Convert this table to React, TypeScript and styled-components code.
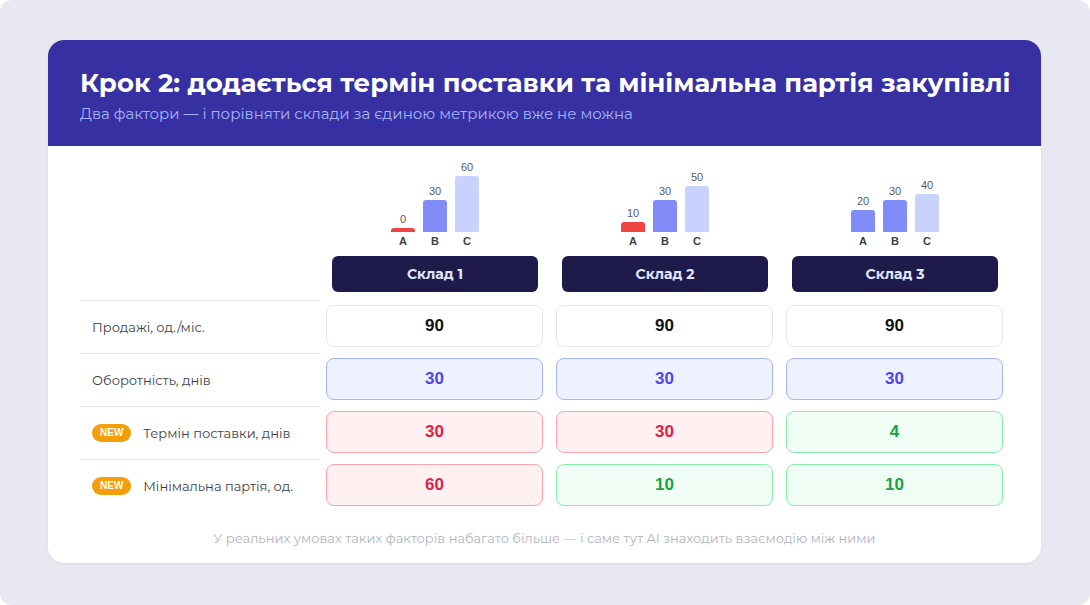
import React from 'react'
import styled, { createGlobalStyle } from 'styled-components'

const GlobalStyle = createGlobalStyle`
  html, body {
    margin: 0;
    padding: 0;
    background: #ffffff;
  }
  * {
    box-sizing: border-box;
  }
`

const SANS = `"Montserrat", "Inter", "Noto Sans", sans-serif`
const ARIAL = `"Liberation Sans", Arial, sans-serif`

const Page = styled.div`
  width: 1090px;
  height: 605px;
  background: #e8e8f2;
  border-radius: 12px;
  padding: 40px 49px 0 48px;
`

const Card = styled.div`
  background: #ffffff;
  border-radius: 16px;
  overflow: hidden;
  height: 523px;
  box-shadow: 0 1px 3px rgba(30, 27, 75, 0.06);
`

const Header = styled.header`
  background: #3730a3;
  height: 106px;
  padding: 27px 32px 0;
`

const Title = styled.h1`
  margin: 0;
  font-family: ${SANS};
  font-weight: 700;
  font-size: 26px;
  line-height: 32px;
  color: #ffffff;
  white-space: nowrap;
`

const Subtitle = styled.p`
  margin: 5px 0 0;
  font-family: ${SANS};
  font-size: 15px;
  line-height: 20px;
  color: #a5b4fc;
`

const Body = styled.div`
  padding: 14px 32px 0;
`

const Grid = styled.div`
  display: grid;
  grid-template-columns: 240px repeat(3, 230px);
`

const Corner = styled.div``

const ChartColumn = styled.div`
  display: flex;
  flex-direction: column;
  align-items: center;
`

const Chart = styled.div`
  height: 72px;
  display: flex;
  align-items: flex-end;
  gap: 8px;
`

const BarSlot = styled.div`
  width: 24px;
  display: flex;
  flex-direction: column;
  align-items: center;
`

const BarValue = styled.span`
  font-family: ${ARIAL};
  font-size: 11px;
  line-height: 12px;
  color: #555a66;
  margin-bottom: 3px;
`

type Tone = 'bad' | 'mid' | 'light'

const barColors: Record<Tone, string> = {
  bad: '#ef4444',
  mid: '#818cf8',
  light: '#c7d2fe',
}

const Bar = styled.div<{ $tone: Tone }>`
  width: 24px;
  background: ${p => barColors[p.$tone]};
  border-radius: 3px 3px 0 0;
`

const Letters = styled.div`
  display: flex;
  gap: 8px;
  margin-top: 2px;
`

const Letter = styled.span`
  width: 24px;
  text-align: center;
  font-family: ${ARIAL};
  font-weight: 700;
  font-size: 11px;
  line-height: 14px;
  color: #3f3f46;
`

const StoreLabel = styled.div`
  margin-top: 8px;
  width: 206px;
  height: 36px;
  border-radius: 6px;
  background: #1e1b4b;
  color: #e0e7ff;
  font-family: ${SANS};
  font-weight: 700;
  font-size: 14px;
  display: flex;
  align-items: center;
  justify-content: center;
`

const RowLabel = styled.div<{ $first?: boolean }>`
  height: 53px;
  border-top: 1px solid #e5e7eb;
  margin-top: ${p => (p.$first ? '8px' : '0')};
  display: flex;
  align-items: center;
  gap: 12px;
  padding-left: 12px;
  font-family: ${SANS};
  font-size: 13px;
  color: #3f3f46;
`

const Badge = styled.span`
  background: #f59e0b;
  color: #ffffff;
  font-family: ${ARIAL};
  font-weight: 700;
  font-size: 10px;
  line-height: 18px;
  height: 18px;
  padding: 0 8px;
  border-radius: 9px;
`

type CellTone = 'plain' | 'info' | 'bad' | 'good'

const cellTones: Record<CellTone, { bg: string; border: string; color: string }> = {
  plain: { bg: '#ffffff', border: '#e5e7eb', color: '#111111' },
  info: { bg: '#eef2ff', border: '#a5b4fc', color: '#4f46e5' },
  bad: { bg: '#fff1f2', border: '#fda4af', color: '#e11d48' },
  good: { bg: '#f0fdf4', border: '#86efac', color: '#16a34a' },
}

const CellWrap = styled.div<{ $first?: boolean }>`
  height: 53px;
  padding: 5px 7px 6px 6px;
  margin-top: ${p => (p.$first ? '8px' : '0')};
`

const Cell = styled.div<{ $tone: CellTone }>`
  height: 42px;
  border-radius: 8px;
  border: 1px solid ${p => cellTones[p.$tone].border};
  background: ${p => cellTones[p.$tone].bg};
  color: ${p => cellTones[p.$tone].color};
  font-family: ${ARIAL};
  font-weight: 700;
  font-size: 17px;
  display: flex;
  align-items: center;
  justify-content: center;
`

const Note = styled.p`
  margin: 18px 0 0;
  text-align: center;
  font-family: ${SANS};
  font-size: 13px;
  color: #b4b4bc;
`

type BarData = { value: number; h: number; tone: Tone }

const stores: { name: string; bars: BarData[] }[] = [
  {
    name: 'Склад 1',
    bars: [
      { value: 0, h: 4, tone: 'bad' },
      { value: 30, h: 32, tone: 'mid' },
      { value: 60, h: 56, tone: 'light' },
    ],
  },
  {
    name: 'Склад 2',
    bars: [
      { value: 10, h: 10, tone: 'bad' },
      { value: 30, h: 32, tone: 'mid' },
      { value: 50, h: 46, tone: 'light' },
    ],
  },
  {
    name: 'Склад 3',
    bars: [
      { value: 20, h: 22, tone: 'mid' },
      { value: 30, h: 32, tone: 'mid' },
      { value: 40, h: 38, tone: 'light' },
    ],
  },
]

const rows: { label: string; isNew?: boolean; cells: [string, CellTone][] }[] = [
  {
    label: 'Продажі, од./міс.',
    cells: [['90', 'plain'], ['90', 'plain'], ['90', 'plain']],
  },
  {
    label: 'Оборотність, днів',
    cells: [['30', 'info'], ['30', 'info'], ['30', 'info']],
  },
  {
    label: 'Термін поставки, днів',
    isNew: true,
    cells: [['30', 'bad'], ['30', 'bad'], ['4', 'good']],
  },
  {
    label: 'Мінімальна партія, од.',
    isNew: true,
    cells: [['60', 'bad'], ['10', 'good'], ['10', 'good']],
  },
]

export default function App() {
  return (
    <>
      <GlobalStyle />
      <Page>
        <Card>
          <Header>
            <Title>Крок 2: додається термін поставки та мінімальна партія закупівлі</Title>
            <Subtitle>Два фактори — і порівняти склади за єдиною метрикою вже не можна</Subtitle>
          </Header>
          <Body>
            <Grid>
              <Corner />
              {stores.map(store => (
                <ChartColumn key={store.name}>
                  <Chart>
                    {store.bars.map((bar, i) => (
                      <BarSlot key={i}>
                        <BarValue>{bar.value}</BarValue>
                        <Bar $tone={bar.tone} style={{ height: bar.h }} />
                      </BarSlot>
                    ))}
                  </Chart>
                  <Letters>
                    <Letter>A</Letter>
                    <Letter>B</Letter>
                    <Letter>C</Letter>
                  </Letters>
                  <StoreLabel>{store.name}</StoreLabel>
                </ChartColumn>
              ))}
              {rows.map((row, r) => (
                <React.Fragment key={row.label}>
                  <RowLabel $first={r === 0}>
                    {row.isNew && <Badge>NEW</Badge>}
                    {row.label}
                  </RowLabel>
                  {row.cells.map(([value, tone], c) => (
                    <CellWrap key={c} $first={r === 0}>
                      <Cell $tone={tone}>{value}</Cell>
                    </CellWrap>
                  ))}
                </React.Fragment>
              ))}
            </Grid>
            <Note>
              У реальних умовах таких факторів набагато більше — і саме тут AI знаходить взаємодію між ними
            </Note>
          </Body>
        </Card>
      </Page>
    </>
  )
}
